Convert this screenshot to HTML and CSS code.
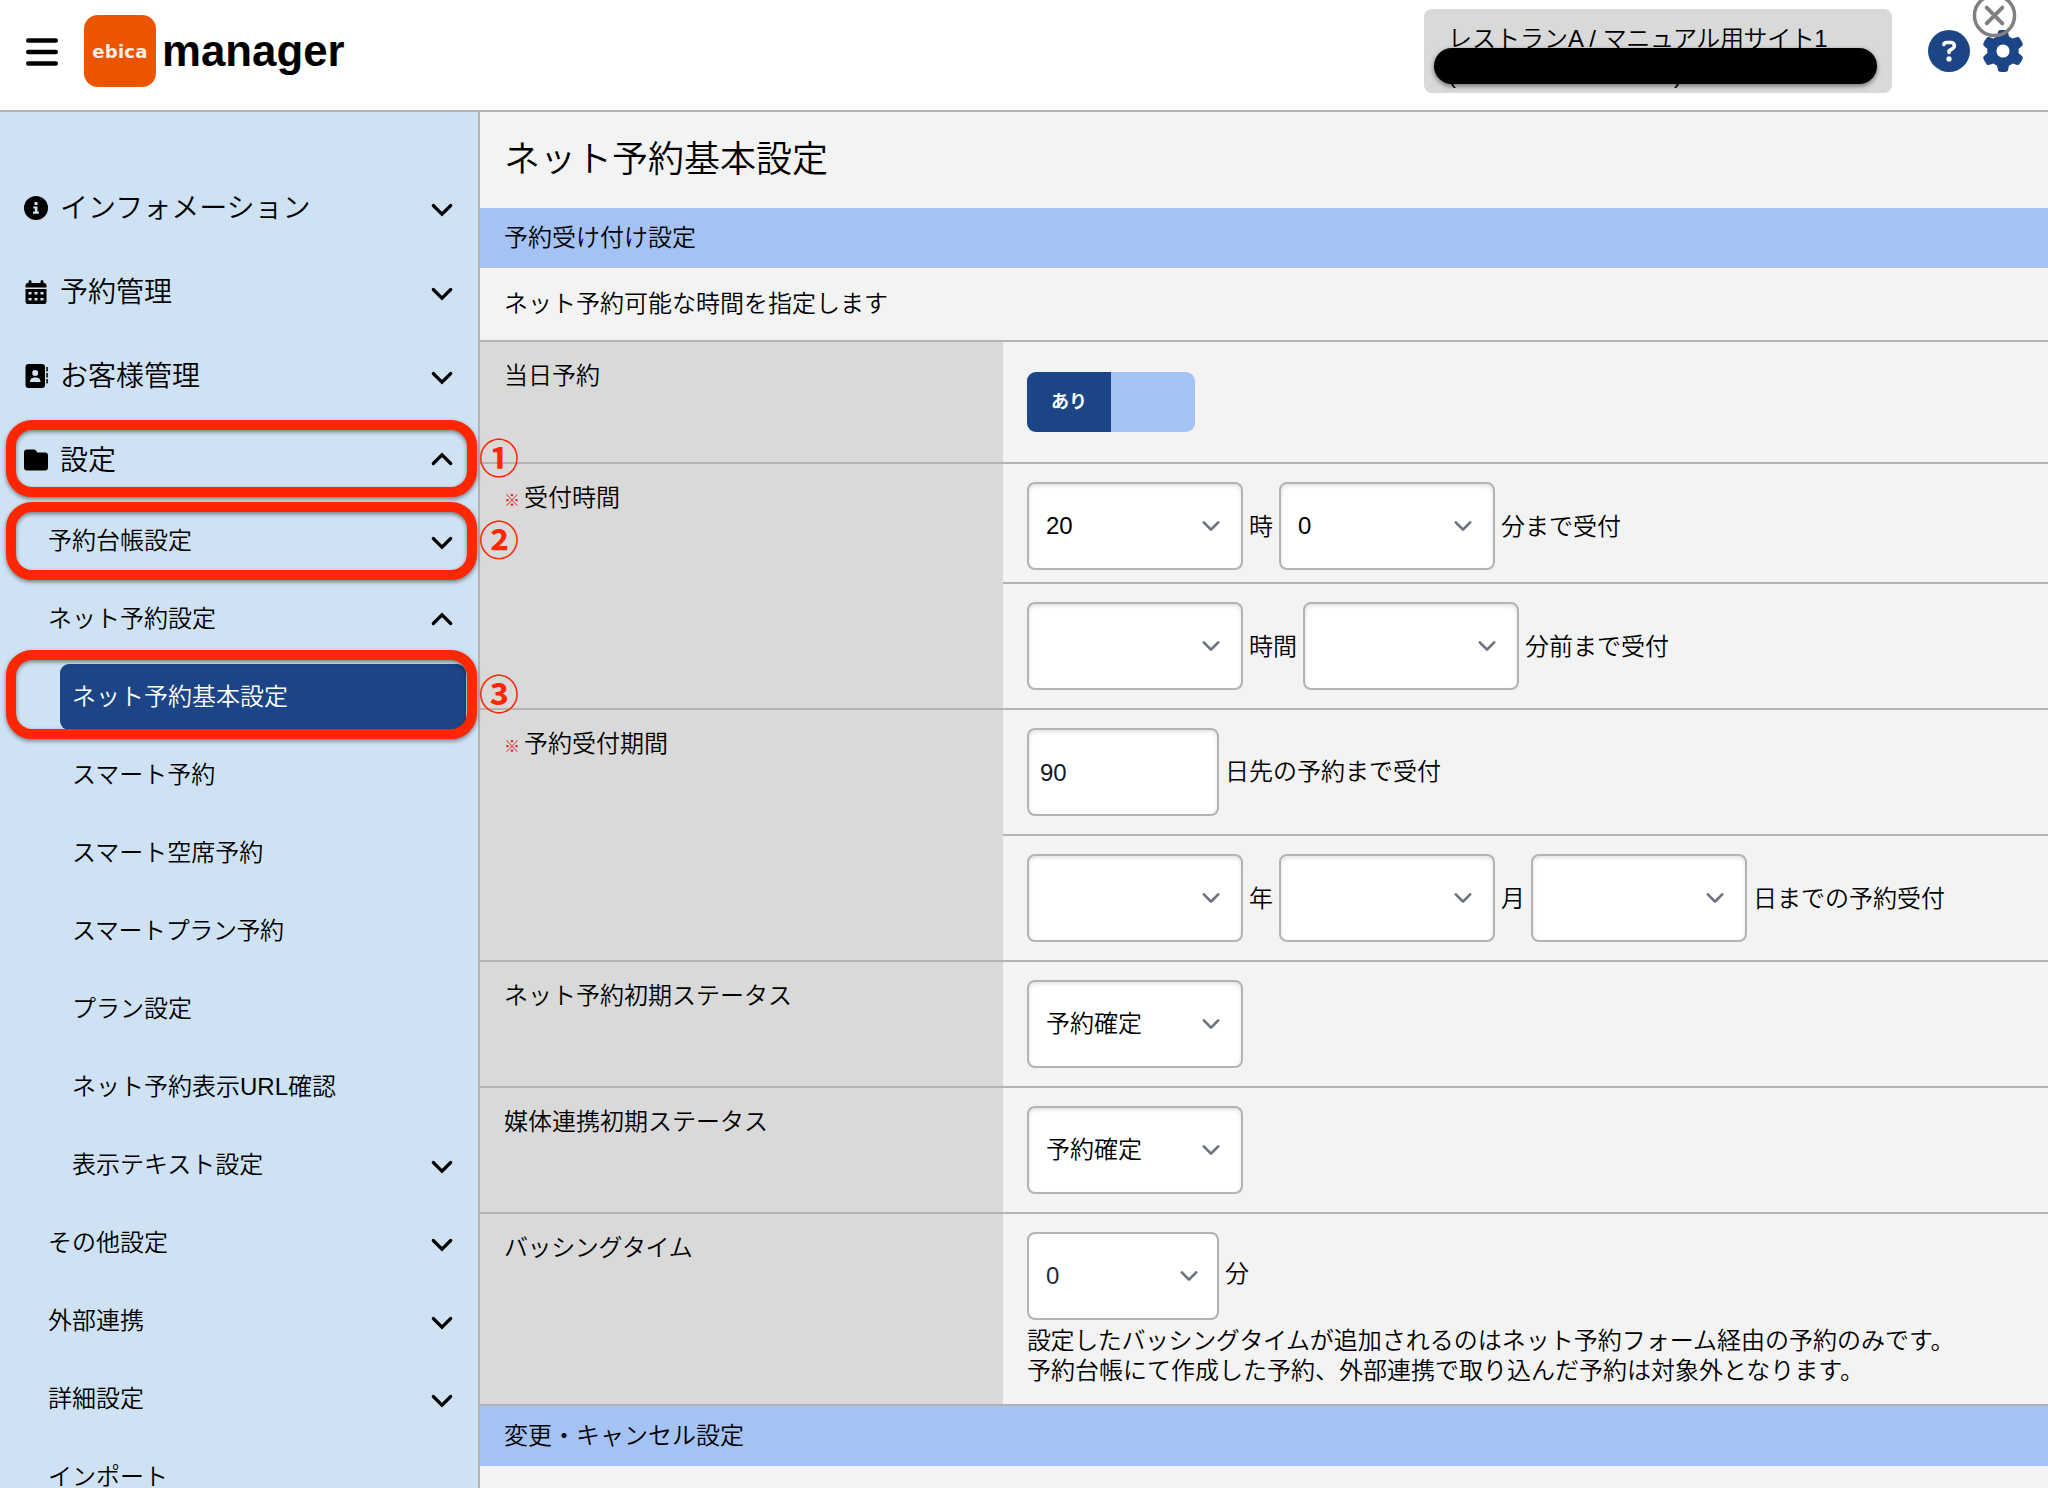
FILE: index.html
```html
<!DOCTYPE html>
<html lang="ja">
<head>
  <meta charset="UTF-8" />
  <title>ネット予約基本設定 | ebica manager</title>
  <link rel="stylesheet" href="styles.css">
</head>
<body>

  <svg class="defs" width="0" height="0">
    <symbol id="down" viewBox="0 0 24 24">
      <path d="M3.3 7.5 12 16.2 20.7 7.5" fill="none" stroke="currentColor" stroke-width="3.2" stroke-linecap="round" />
    </symbol>
    <symbol id="up" viewBox="0 0 24 24">
      <path d="M3.3 16.5 12 7.8 20.7 16.5" fill="none" stroke="currentColor" stroke-width="3.2" stroke-linecap="round" />
    </symbol>
    <symbol id="caret" viewBox="0 0 20 20">
      <path d="M6 8l4 4 4-4" fill="none" stroke="#6b7280" stroke-width="1.5" stroke-linecap="round" stroke-linejoin="round" />
    </symbol>
  </svg>

  <header class="header">
    <svg class="menu-btn" viewBox="0 0 32 28">
      <path d="M2.3 2.5h27.4M2.3 14h27.4M2.3 25.5h27.4" stroke="#000" stroke-width="4.6" stroke-linecap="round" />
    </svg>
    <div class="logo">ebica</div>
    <div class="brand">manager</div>
    <div class="site">
      <div>レストランA / <span class="tight">マニュアル用サイト1</span></div>
      <div class="site-id"><span>(</span><span>)</span></div>
      <div class="mask"></div>
    </div>
    <svg class="head-icon help" viewBox="0 0 512 512">
      <circle cx="256" cy="256" r="256" fill="#1c4587" />
      <path d="M193 176c6-18 18-24 34-24h52c24 0 42 17 42 40 0 16-8 27-21 35l-44 26v22" fill="none" stroke="#fff" stroke-width="44" stroke-linecap="round" stroke-linejoin="round" />
      <circle cx="256" cy="352" r="32" fill="#fff" />
    </svg>
    <svg class="head-icon gear" viewBox="0 0 512 512">
      <path fill="#1c4587" d="M495.900 166.600c3.200 8.700.5 18.400-6.400 24.600l-43.300 39.400c1.100 8.300 1.700 16.800 1.700 25.400s-.6 17.100-1.700 25.400l43.300 39.400c6.900 6.200 9.600 15.900 6.400 24.600-4.400 11.900-9.700 23.300-15.800 34.300l-4.700 8.100c-6.600 11-14 21.400-22.100 31.200-5.900 7.200-15.700 9.600-24.500 6.800l-55.700-17.700c-13.400 10.300-28.200 18.900-44 25.400l-12.500 57.100c-2 9.100-9 16.300-18.200 17.800-13.800 2.300-28 3.500-42.500 3.500s-28.700-1.200-42.500-3.500c-9.200-1.500-16.200-8.700-18.200-17.800l-12.500-57.100c-15.800-6.500-30.600-15.100-44-25.400L83.100 425.900c-8.800 2.800-18.600.3-24.500-6.800-8.100-9.800-15.500-20.200-22.100-31.200l-4.700-8.100c-6.100-11-11.400-22.400-15.800-34.300-3.200-8.700-.5-18.400 6.400-24.600l43.300-39.400C64.600 273.100 64 264.600 64 256s.6-17.100 1.700-25.400L22.400 191.200c-6.900-6.200-9.600-15.900-6.400-24.600 4.400-11.900 9.700-23.300 15.800-34.300l4.700-8.100c6.600-11 14-21.400 22.100-31.200 5.900-7.200 15.700-9.600 24.500-6.800l55.700 17.700c13.400-10.300 28.200-18.900 44-25.400l12.500-57.100c2-9.100 9-16.300 18.200-17.800C227.300 1.200 241.500 0 256 0s28.700 1.200 42.500 3.500c9.200 1.500 16.200 8.700 18.200 17.800l12.500 57.100c15.800 6.500 30.600 15.100 44 25.400l55.700-17.700c8.800-2.800 18.600-.3 24.500 6.800 8.100 9.800 15.500 20.200 22.100 31.200l4.700 8.100c6.100 11 11.400 22.400 15.800 34.300zM256 336a80 80 0 1 0 0-160 80 80 0 1 0 0 160z" />
    </svg>
    <svg class="close" viewBox="0 0 46 46">
      <circle cx="23" cy="23" r="20.500" fill="none" stroke="#808080" stroke-width="3.600" />
      <path d="M15 15l16 16M31 15l-16 16" stroke="#808080" stroke-width="4" stroke-linecap="round" />
    </svg>
  </header>

  <div class="page">
    <nav class="sidebar">
      <div class="item">
        <svg class="icon" viewBox="0 0 24 24"><circle cx="12" cy="12" r="12" /><path fill="#cfe2f3" d="M10.500 6h3v3h-3zM9.200 10.400h4.200v5.200h1.500v2.200H9v-2.200h1.900v-3H9.200z" /></svg>
        <span>インフォメーション</span><svg class="chev"><use href="#down" /></svg>
      </div>
      <div class="item">
        <svg class="icon" viewBox="0 0 24 24"><path d="M6 0a1.500 1.500 0 0 1 1.500 1.500V3h9V1.500a1.500 1.500 0 0 1 3 0V3h1A2.200 2.200 0 0 1 22.500 5.200V7.500h-21V5.200A2.200 2.200 0 0 1 3.700 3h.8V1.500A1.500 1.500 0 0 1 6 0zM1.500 9h21v12.700a2.300 2.300 0 0 1-2.300 2.300H3.800a2.300 2.300 0 0 1-2.300-2.300z" /><path fill="#cfe2f3" d="M4.500 12h3v2.600h-3zM10.500 12h3v2.600h-3zM16.500 12h3v2.600h-3zM4.500 18h3v2.600h-3zM10.500 18h3v2.600h-3zM16.500 18h3v2.600h-3z" /></svg>
        <span>予約管理</span><svg class="chev"><use href="#down" /></svg>
      </div>
      <div class="item">
        <svg class="icon" viewBox="0 0 24 24"><path d="M4.500 0H18a3 3 0 0 1 3 3v18a3 3 0 0 1-3 3H4.500a3 3 0 0 1-3-3V3a3 3 0 0 1 3-3zM22.300 3h1.500v4.500h-1.500zM22.300 9h1.500v4.500h-1.500zM22.300 15h1.500v4.500h-1.500z" /><circle cx="11.200" cy="9" r="3" fill="#cfe2f3" /><path fill="#cfe2f3" d="M6 18a4.500 4.500 0 0 1 4-4.500h2.500a4.500 4.500 0 0 1 4 4.500z" /></svg>
        <span>お客様管理</span><svg class="chev"><use href="#down" /></svg>
      </div>
      <div class="item">
        <svg class="icon" viewBox="0 0 24 24"><path d="M3 22.500h18a3 3 0 0 0 3-3v-12a3 3 0 0 0-3-3h-6.800c-.5 0-.9-.2-1.200-.6l-.9-1.200A3 3 0 0 0 9.700 1.500H3a3 3 0 0 0-3 3v15a3 3 0 0 0 3 3z" /></svg>
        <span>設定</span><svg class="chev chev-up"><use href="#up" /></svg>
        <div class="frame frame-1"></div><div class="num">①</div>
      </div>
      <div class="item sub">
        <span>予約台帳設定</span><svg class="chev"><use href="#down" /></svg>
        <div class="frame frame-2"></div><div class="num num-2">②</div>
      </div>
      <div class="item sub"><span>ネット予約設定</span><svg class="chev chev-up"><use href="#up" /></svg></div>
      <div class="item leaf active">
        <span>ネット予約基本設定</span>
        <div class="frame frame-3"></div><div class="num num-3">③</div>
      </div>
      <div class="item leaf"><span>スマート予約</span></div>
      <div class="item leaf"><span>スマート空席予約</span></div>
      <div class="item leaf"><span class="tight">スマートプラン予約</span></div>
      <div class="item leaf"><span>プラン設定</span></div>
      <div class="item leaf"><span>ネット予約表示URL確認</span></div>
      <div class="item leaf"><span>表示テキスト設定</span><svg class="chev"><use href="#down" /></svg></div>
      <div class="item sub"><span>その他設定</span><svg class="chev"><use href="#down" /></svg></div>
      <div class="item sub"><span>外部連携</span><svg class="chev"><use href="#down" /></svg></div>
      <div class="item sub"><span>詳細設定</span><svg class="chev"><use href="#down" /></svg></div>
      <div class="item sub"><span>インポート</span></div>
    </nav>

    <main class="main">
      <h1>ネット予約基本設定</h1>
      <h2>予約受け付け設定</h2>
      <p class="desc">ネット予約可能な時間を指定します</p>

      <div class="row">
        <div class="label">当日予約</div>
        <div class="cells">
          <div class="cell toggle-cell"><div class="toggle"><span>あり</span></div></div>
        </div>
      </div>
      <div class="row">
        <div class="label"><span class="req">※</span>受付時間</div>
        <div class="cells">
          <div class="cell first">
            <div class="select">20<svg><use href="#caret" /></svg></div><span class="text">時</span>
            <div class="select">0<svg><use href="#caret" /></svg></div><span class="text">分まで受付</span>
          </div>
          <div class="cell">
            <div class="select"><svg><use href="#caret" /></svg></div><span class="text">時間</span>
            <div class="select"><svg><use href="#caret" /></svg></div><span class="text">分前まで受付</span>
          </div>
        </div>
      </div>
      <div class="row">
        <div class="label"><span class="req">※</span>予約受付期間</div>
        <div class="cells">
          <div class="cell">
            <div class="select input">90</div>日先の予約まで受付
          </div>
          <div class="cell">
            <div class="select"><svg><use href="#caret" /></svg></div><span class="text">年</span>
            <div class="select"><svg><use href="#caret" /></svg></div><span class="text">月</span>
            <div class="select"><svg><use href="#caret" /></svg></div><span class="text">日までの予約受付</span>
          </div>
        </div>
      </div>
      <div class="row">
        <div class="label">ネット予約初期ステータス</div>
        <div class="cells">
          <div class="cell"><div class="select">予約確定<svg><use href="#caret" /></svg></div></div>
        </div>
      </div>
      <div class="row">
        <div class="label">媒体連携初期ステータス</div>
        <div class="cells">
          <div class="cell"><div class="select">予約確定<svg><use href="#caret" /></svg></div></div>
        </div>
      </div>
      <div class="row">
        <div class="label"><span class="tight">バッシングタイム</span></div>
        <div class="cells">
          <div class="cell">
            <div class="select narrow">0<svg><use href="#caret" /></svg></div><span class="unit">分</span>
            <p class="note"><span class="tight">設定したバッシングタイム</span>が追加されるのはネット予約フォーム経由の予約のみです。<br>予約台帳にて作成した予約、外部連携で取り込んだ予約は対象外となります。</p>
          </div>
        </div>
      </div>
      <h2>変更・キャンセル設定</h2>
    </main>
  </div>

</body>
</html>
```
FILE: styles.css
```css
* {
  box-sizing: border-box;
}

body {
  margin: 0;
  height: 1488px;
  overflow: hidden;
  font-family: "Liberation Sans", "Noto Sans CJK JP", sans-serif;
  font-size: 24px;
  font-weight: 350;
  line-height: 30px;
  color: #000;
  background: #f3f3f3;
}

h1, h2, p {
  margin: 0;
  font-weight: 350;
}

.defs {
  display: none;
}

.tight {
  letter-spacing: -0.4px;
}

.header {
  position: relative;
  display: flex;
  align-items: center;
  height: 112px;
  padding: 0 24px 8px 26px;
  background: white;
  border-bottom: 2px solid #b3b3b3;
}

.menu-btn {
  width: 32px;
  height: 28px;
  margin-top: 2px;
}

.logo {
  width: 72px;
  height: 72px;
  margin: 0 6px 0 26px;
  border-radius: 14px;
  background: #eb5500;
  color: #fdeee5;
  font: bold 18px/73px "DejaVu Sans", sans-serif;
  letter-spacing: 0.3px;
  text-align: center;
}

.brand {
  font-size: 43.8px;
  font-weight: bold;
}

.site {
  position: relative;
  width: 468px;
  height: 84px;
  margin-left: auto;
  padding: 12px 24px;
  border-radius: 8px;
  background: #d9d9d9;
  line-height: 36px;
  white-space: nowrap;
}

.site-id {
  display: flex;
  justify-content: space-between;
  width: 234px;
}

.mask {
  position: absolute;
  left: 10px;
  top: 39px;
  width: 443px;
  height: 36px;
  border-radius: 18px;
  background: #000;
  box-shadow: 0 2px 5px rgba(0,0,0,0.5);
}

.head-icon {
  width: 42px;
  height: 42px;
}

.help {
  margin: 0 12px 0 36px;
}

.close {
  position: absolute;
  left: 1972px;
  top: -7px;
  width: 45px;
  height: 45px;
}

.page {
  display: flex;
}

.sidebar {
  width: 480px;
  height: 1376px;
  padding-top: 54px;
  background: #cfe2f3;
  border-right: 2px solid #b3b3b3;
}

.item {
  position: relative;
  display: flex;
  align-items: center;
  height: 84px;
  padding: 0 24px;
  font-size: 28px;
}

.item > span {
  padding-top: 2px;
}

.icon {
  width: 24px;
  height: 24px;
  margin-right: 12px;
}

.chev {
  width: 24px;
  height: 24px;
  margin: 3px 0 0 auto;
}

.chev-up {
  margin-top: -2px;
}

.sub, .leaf {
  height: 78px;
  padding-left: 48px;
  font-size: 24px;
}

.sub > span, .leaf > span {
  padding-top: 0;
}

.sub .chev, .leaf .chev {
  margin-top: 4px;
}

.sub .chev-up {
  margin-top: -1px;
}

.leaf {
  padding-left: 72px;
}

.active {
  height: 66px;
  margin: 6px 12px 6px 60px;
  padding-left: 12px;
  border-radius: 9px;
  background: #1c4587;
  color: white;
}

/* step marks */
.frame {
  position: absolute;
  left: 6px;
  width: 471px;
  border: 10px solid #ff2600;
  border-radius: 26px;
  filter: drop-shadow(0 2px 2px rgba(0,0,0,0.45));
}

.frame-1 {
  top: 2px;
  height: 77px;
}

.frame-2 {
  top: 0;
  height: 78px;
}

.frame-3 {
  left: -54px;
  top: -14px;
  height: 89px;
}

.num {
  position: absolute;
  left: 479px;
  top: 18px;
  z-index: 1;
  color: #ff2600;
  font-family: "Noto Sans CJK JP", sans-serif;
  font-size: 40px;
  font-weight: bold;
  line-height: 40px;
}

.num-2 {
  top: 16px;
}

.num-3 {
  left: 419px;
  top: 8px;
}

.main {
  flex: 1;
}

h1 {
  height: 96px;
  padding-left: 24px;
  font-size: 36px;
  line-height: 96px;
}

h2 {
  height: 60px;
  padding-left: 24px;
  font-size: 24px;
  line-height: 60px;
  background: #a4c2f4;
}

.desc {
  height: 74px;
  padding-left: 24px;
  line-height: 72px;
  border-bottom: 2px solid #b3b3b3;
}

.row {
  display: flex;
  border-bottom: 2px solid #b3b3b3;
}

.label {
  width: 523px;
  padding: 19px 24px 17px;
  background: #d9d9d9;
}

.req {
  margin-right: 4px;
  color: #e02020;
  font-size: 16px;
}

.cells {
  flex: 1;
}

.cell {
  display: flex;
  flex-wrap: wrap;
  align-items: center;
  gap: 6px;
  padding: 18px 24px;
}

.cell + .cell {
  border-top: 2px solid #b3b3b3;
}

.first {
  padding-bottom: 12px;
}

.toggle-cell {
  padding: 30px 24px;
}

.toggle {
  width: 168px;
  height: 60px;
  border-radius: 9px;
  background: #a4c2f4;
  overflow: hidden;
}

.toggle span {
  display: block;
  width: 84px;
  background: #1c4587;
  color: white;
  font-size: 18px;
  font-weight: bold;
  line-height: 60px;
  text-align: center;
}

.text {
  padding-top: 2px;
}

.select {
  display: flex;
  align-items: center;
  width: 216px;
  height: 88px;
  padding: 0 12px 0 17px;
  border: 2px solid #b3b3b3;
  border-radius: 8px;
  background: white;
  box-shadow: inset 0 2px 4px rgba(0,0,0,0.12);
}

.select svg {
  width: 36px;
  height: 36px;
  margin-left: auto;
}

.input {
  width: 192px;
  padding: 2px 0 0 11px;
  color: #111827;
}

.narrow {
  width: 192px;
  padding-right: 10px;
  color: #1f2937;
  box-shadow: none;
}

.unit {
  margin-bottom: 5px;
}

.note {
  width: 100%;
}
```
